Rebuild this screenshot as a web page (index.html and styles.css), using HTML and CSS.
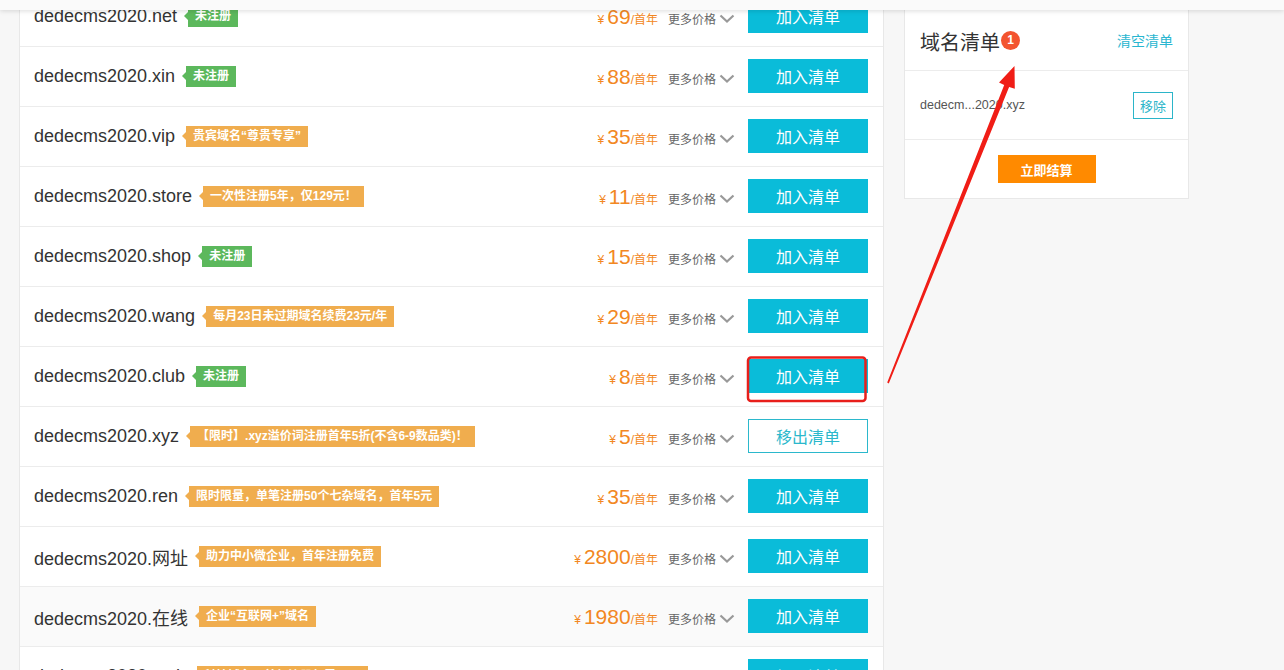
FILE: index.html
```html
<!DOCTYPE html>
<html lang="zh-CN">
<head>
    <meta charset="UTF-8">
    <meta name="viewport" content="width=device-width, initial-scale=1.0">
    <title>域名注册 - 查询结果</title>
    <link rel="stylesheet" href="styles.css">
</head>
<body>
    <div class="topbar"></div>

    <div class="wrap">
        <div class="domain-list">
            <div class="row">
                <span class="name">dedecms2020.net</span>
                <span class="tag green">未注册</span>
                <span class="price"><i>¥</i><b>69</b><em>/首年</em></span>
                <span class="more">更多价格<svg width="16" height="10" viewBox="0 0 16 10"><polyline points="1.5,1.5 8,7.5 14.5,1.5"/></svg></span>
                <button class="btn-add">加入清单</button>
            </div>
            <div class="row">
                <span class="name">dedecms2020.xin</span>
                <span class="tag green">未注册</span>
                <span class="price"><i>¥</i><b>88</b><em>/首年</em></span>
                <span class="more">更多价格<svg width="16" height="10" viewBox="0 0 16 10"><polyline points="1.5,1.5 8,7.5 14.5,1.5"/></svg></span>
                <button class="btn-add">加入清单</button>
            </div>
            <div class="row">
                <span class="name">dedecms2020.vip</span>
                <span class="tag orange">贵宾域名“尊贵专享”</span>
                <span class="price"><i>¥</i><b>35</b><em>/首年</em></span>
                <span class="more">更多价格<svg width="16" height="10" viewBox="0 0 16 10"><polyline points="1.5,1.5 8,7.5 14.5,1.5"/></svg></span>
                <button class="btn-add">加入清单</button>
            </div>
            <div class="row">
                <span class="name">dedecms2020.store</span>
                <span class="tag orange">一次性注册5年，仅129元！</span>
                <span class="price"><i>¥</i><b>11</b><em>/首年</em></span>
                <span class="more">更多价格<svg width="16" height="10" viewBox="0 0 16 10"><polyline points="1.5,1.5 8,7.5 14.5,1.5"/></svg></span>
                <button class="btn-add">加入清单</button>
            </div>
            <div class="row">
                <span class="name">dedecms2020.shop</span>
                <span class="tag green">未注册</span>
                <span class="price"><i>¥</i><b>15</b><em>/首年</em></span>
                <span class="more">更多价格<svg width="16" height="10" viewBox="0 0 16 10"><polyline points="1.5,1.5 8,7.5 14.5,1.5"/></svg></span>
                <button class="btn-add">加入清单</button>
            </div>
            <div class="row">
                <span class="name">dedecms2020.wang</span>
                <span class="tag orange">每月23日未过期域名续费23元/年</span>
                <span class="price"><i>¥</i><b>29</b><em>/首年</em></span>
                <span class="more">更多价格<svg width="16" height="10" viewBox="0 0 16 10"><polyline points="1.5,1.5 8,7.5 14.5,1.5"/></svg></span>
                <button class="btn-add">加入清单</button>
            </div>
            <div class="row">
                <span class="name">dedecms2020.club</span>
                <span class="tag green">未注册</span>
                <span class="price"><i>¥</i><b>8</b><em>/首年</em></span>
                <span class="more">更多价格<svg width="16" height="10" viewBox="0 0 16 10"><polyline points="1.5,1.5 8,7.5 14.5,1.5"/></svg></span>
                <button class="btn-add">加入清单</button>
            </div>
            <div class="row">
                <span class="name">dedecms2020.xyz</span>
                <span class="tag orange">【限时】.xyz溢价词注册首年5折(不含6-9数品类)！</span>
                <span class="price"><i>¥</i><b>5</b><em>/首年</em></span>
                <span class="more">更多价格<svg width="16" height="10" viewBox="0 0 16 10"><polyline points="1.5,1.5 8,7.5 14.5,1.5"/></svg></span>
                <button class="btn-remove">移出清单</button>
            </div>
            <div class="row">
                <span class="name">dedecms2020.ren</span>
                <span class="tag orange">限时限量，单笔注册50个七杂域名，首年5元</span>
                <span class="price"><i>¥</i><b>35</b><em>/首年</em></span>
                <span class="more">更多价格<svg width="16" height="10" viewBox="0 0 16 10"><polyline points="1.5,1.5 8,7.5 14.5,1.5"/></svg></span>
                <button class="btn-add">加入清单</button>
            </div>
            <div class="row">
                <span class="name">dedecms2020.网址</span>
                <span class="tag orange">助力中小微企业，首年注册免费</span>
                <span class="price"><i>¥</i><b>2800</b><em>/首年</em></span>
                <span class="more">更多价格<svg width="16" height="10" viewBox="0 0 16 10"><polyline points="1.5,1.5 8,7.5 14.5,1.5"/></svg></span>
                <button class="btn-add">加入清单</button>
            </div>
            <div class="row hover">
                <span class="name">dedecms2020.在线</span>
                <span class="tag orange">企业“互联网+”域名</span>
                <span class="price"><i>¥</i><b>1980</b><em>/首年</em></span>
                <span class="more">更多价格<svg width="16" height="10" viewBox="0 0 16 10"><polyline points="1.5,1.5 8,7.5 14.5,1.5"/></svg></span>
                <button class="btn-add">加入清单</button>
            </div>
            <div class="row">
                <span class="name">dedecms2020.tech</span>
                <span class="tag orange">科技域名，首年注册仅需11元</span>
                <span class="price"><i>¥</i><b>11</b><em>/首年</em></span>
                <span class="more">更多价格<svg width="16" height="10" viewBox="0 0 16 10"><polyline points="1.5,1.5 8,7.5 14.5,1.5"/></svg></span>
                <button class="btn-add">加入清单</button>
            </div>
        </div>

        <div class="cart">
            <div class="cart-head">
                <span class="cart-title">域名清单</span>
                <span class="badge">1</span>
                <a class="cart-clear" href="#">清空清单</a>
            </div>
            <div class="cart-item">
                <span class="cart-name">dedecm...2020.xyz</span>
                <button class="btn-del">移除</button>
            </div>
            <div class="cart-foot">
                <button class="btn-pay">立即结算</button>
            </div>
        </div>
    </div>

    <!-- annotation drawn over the screenshot -->
    <svg class="marks" width="1284" height="670" viewBox="0 0 1284 670">
        <rect x="748" y="357.5" width="117.5" height="43.5" rx="3" fill="none" stroke="#e81f1b" stroke-width="2.5"/>
        <polygon fill="#f01d16" points="887.2,382.6 1004.2,85.1 999,82.4 1014.5,66 1014.8,88.8 1009.1,87 888.8,383.4"/>
    </svg>
</body>
</html>
```

FILE: styles.css
```css
body {
    margin: 0;
    background-color: #f7f7f7;
    font-family: "Liberation Sans", "Noto Sans CJK SC", sans-serif;
    color: #333;
    overflow: hidden;
}

.topbar {
    position: fixed;
    top: 0;
    left: 0;
    right: 0;
    height: 10px;
    background-color: #fafafa;
    box-shadow: 0 1px 5px rgba(0, 0, 0, 0.14);
    z-index: 5;
}

.wrap {
    display: flex;
    align-items: flex-start;
    gap: 20px;
    margin-left: 19px;
}

.domain-list {
    width: 863px;
    margin-top: -13px;
    background-color: #fff;
    border-left: 1px solid #e8e8e8;
    border-right: 1px solid #e8e8e8;
}

.row {
    display: flex;
    align-items: center;
    height: 59px;
    padding: 0 15px 0 14px;
    border-bottom: 1px solid #ececec;
}

.row.hover {
    background-color: #fafafa;
}

.name {
    font-size: 18px;
    color: #333;
}

.tag {
    position: relative;
    margin-left: 11px;
    padding: 0 7px;
    height: 21px;
    line-height: 21px;
    font-size: 12px;
    font-weight: bold;
    color: #fff;
}

.tag::before {
    content: "";
    position: absolute;
    left: -4px;
    top: 6px;
    border-top: 4px solid transparent;
    border-bottom: 4px solid transparent;
    border-right: 4px solid;
}

.tag.green {
    background-color: #5cb85c;
}

.tag.green::before {
    border-right-color: #5cb85c;
}

.tag.orange {
    background-color: #f0ad4e;
}

.tag.orange::before {
    border-right-color: #f0ad4e;
}

.price {
    margin-left: auto;
    color: #f28722;
    white-space: nowrap;
}

.price i {
    font-style: normal;
    font-size: 12px;
    margin-right: 3px;
}

.price b {
    font-weight: normal;
    font-size: 21px;
}

.price em {
    font-style: normal;
    font-size: 12px;
}

.more {
    display: flex;
    align-items: center;
    margin-left: 10px;
    margin-top: 4px;
    font-size: 12px;
    color: #666;
}

.more svg {
    margin-left: 3px;
    fill: none;
    stroke: #999;
    stroke-width: 2.2;
}

.btn-add,
.btn-remove {
    width: 120px;
    height: 34px;
    margin-left: 13px;
    margin-top: -2px;
    border: none;
    font-family: inherit;
    font-size: 16px;
    cursor: pointer;
}

.btn-add {
    background-color: #0abcd9;
    color: #fff;
}

.btn-remove {
    background-color: #fff;
    border: 1px solid #2bb8cc;
    color: #2bb8cc;
}

.cart {
    width: 283px;
    margin-top: 10px;
    background-color: #fff;
    border: 1px solid #e8e8e8;
    border-top: none;
}

.cart-head {
    display: flex;
    align-items: center;
    box-sizing: border-box;
    height: 61px;
    padding: 2px 15px 0;
    border-bottom: 1px solid #ececec;
}

.cart-title {
    font-size: 20px;
    color: #333;
}

.badge {
    width: 19px;
    height: 19px;
    margin-left: 1px;
    margin-top: -1px;
    border-radius: 50%;
    background-color: #f3542f;
    color: #fff;
    font-size: 12px;
    font-weight: bold;
    line-height: 19px;
    text-align: center;
}

.cart-clear {
    margin-left: auto;
    margin-top: -3px;
    font-size: 14px;
    color: #29b6d0;
    text-decoration: none;
}

.cart-item {
    display: flex;
    align-items: center;
    justify-content: space-between;
    height: 68px;
    padding: 0 15px;
    border-bottom: 1px solid #ececec;
}

.cart-name {
    font-size: 12.5px;
    color: #555;
}

.btn-del {
    width: 40px;
    height: 27px;
    padding: 0;
    background-color: #fff;
    border: 1px solid #2bb5c9;
    color: #2bb5c9;
    font-family: inherit;
    font-size: 13px;
}

.cart-foot {
    display: flex;
    justify-content: center;
    padding: 15px 0;
}

.btn-pay {
    width: 98px;
    height: 28px;
    border: none;
    background-color: #ff8a00;
    color: #fff;
    font-family: inherit;
    font-size: 13px;
    font-weight: bold;
}

.marks {
    position: absolute;
    top: 0;
    left: 0;
    pointer-events: none;
    z-index: 10;
}
```
